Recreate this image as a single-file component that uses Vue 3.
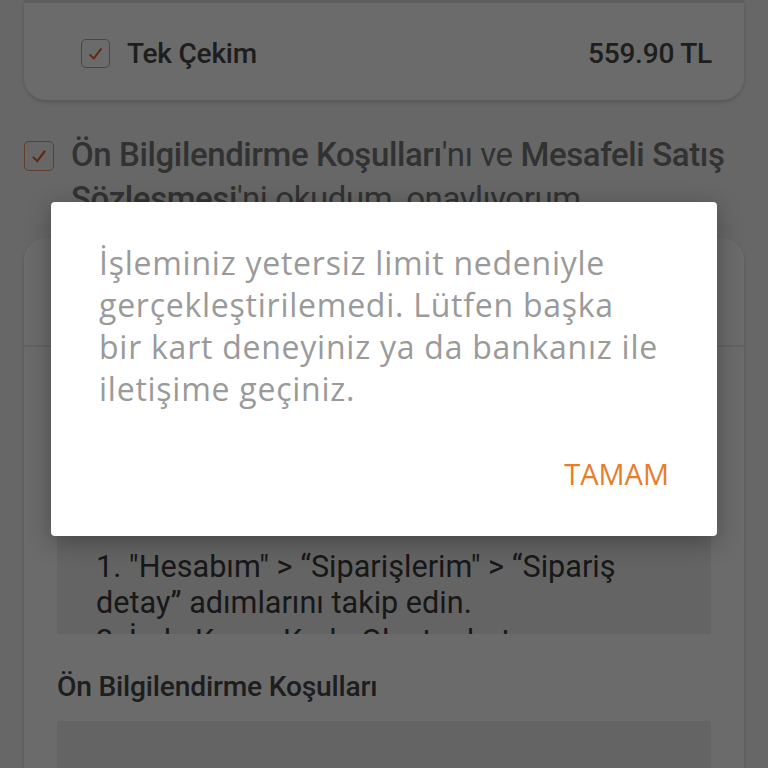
<script setup>
const steps = ['1. "Hesabım" > “Siparişlerim" > “Sipariş detay” adımlarını takip edin.', '2. İade Kargo Kodu Oluştur butonuna']
const lines = ['İşleminiz yetersiz limit nedeniyle', 'gerçekleştirilemedi. Lütfen başka', 'bir kart deneyiniz ya da bankanız ile', 'iletişime geçiniz.']
</script>

<template>
  <div class="screen">
    <div class="page">
      <section class="card pay">
        <div class="pay-row">
          <span class="check">
            <svg viewBox="0 0 16 16"><path d="M4.5 8.5 7 11l4.5-6" /></svg>
          </span>
          <span class="pay-name">Tek Çekim</span>
          <span class="pay-price">559.90 TL</span>
        </div>
      </section>

      <div class="consent">
        <span class="check">
          <svg viewBox="0 0 16 16"><path d="M4.5 8.5 7 11l4.5-6" /></svg>
        </span>
        <p><b>Ön Bilgilendirme Koşulları</b>'nı ve <b>Mesafeli Satış Sözleşmesi</b>'ni okudum, onaylıyorum.</p>
      </div>

      <section class="card terms">
        <div class="terms-head"></div>
        <div class="terms-body">
          <div class="scroll-box">
            <p v-for="s in steps" :key="s">{{ s }}</p>
          </div>
          <h3>Ön Bilgilendirme Koşulları</h3>
          <div class="empty-box"></div>
        </div>
      </section>
    </div>

    <div class="scrim">
      <div class="dialog">
        <p class="message"><span v-for="l in lines" :key="l">{{ l }}</span></p>
        <div class="actions"><span class="ok">TAMAM</span></div>
      </div>
    </div>
  </div>
</template>

<style>
html, body { margin: 0; background: #666; }
</style>

<style scoped>
.screen {
  position: relative;
  width: 768px;
  height: 768px;
  overflow: hidden;
  font-family: Roboto, "Liberation Sans", sans-serif;
  color: #484848;
}
.page {
  display: flex;
  flex-direction: column;
  height: 768px;
  padding: 0 24px;
  box-sizing: border-box;
  background: #f6f6f6;
}
.card {
  background: #fff;
  box-shadow: 0 2px 4px rgba(0, 0, 0, .18);
  flex: none;
}
.pay {
  height: 100px;
  border-radius: 0 0 22px 22px;
  border-top: 3px solid #e0e0e0;
  box-sizing: border-box;
  padding: 0 32px 0 57px;
}
.pay-row {
  display: flex;
  align-items: center;
  height: 97px;
  padding-top: 3px;
  box-sizing: border-box;
  font-size: 28px;
  font-weight: 500;
  letter-spacing: -.2px;
}
.pay-name { margin-left: 17px; }
.pay-price { margin-left: auto; }
.check {
  flex: none;
  width: 29px;
  height: 29px;
  box-sizing: border-box;
  border: 1.5px solid #e8956a;
  border-radius: 5px;
  display: flex;
}
.check svg { width: 100%; height: 100%; fill: none; stroke: #e0671d; stroke-width: 1.2; }
.consent {
  display: flex;
  gap: 17px;
  margin-top: 39px;
  height: 99px;
}
.consent .check { width: 30px; height: 30px; margin-top: 2px; }
.consent p {
  margin: -6px 0 0;
  font-size: 33px;
  line-height: 44px;
  letter-spacing: -.4px;
  color: #777;
}
.consent b { font-weight: 500; }
.terms {
  flex: 1;
  min-height: 0;
  overflow: hidden;
  border-radius: 22px 22px 0 0;
}
.terms-head { height: 107px; border-bottom: 2px solid #ececec; }
.terms-body { padding: 0 33px; }
.scroll-box {
  margin-top: 40px;
  height: 247px;
  padding: 0 39px;
  box-sizing: border-box;
  background: #eee;
  overflow: hidden;
  display: flex;
  flex-direction: column;
  justify-content: flex-end;
  font-size: 30.6px;
  line-height: 36px;
  color: #3a3a3a;
}
.scroll-box p { margin: 0; flex: none; }
.scroll-box p + p { height: 11px; margin-top: 2px; }
h3 {
  margin: 37px 0 0;
  font-size: 28.2px;
  font-weight: 500;
  line-height: 32px;
  letter-spacing: -.2px;
}
.empty-box { margin-top: 18px; height: 60px; background: #eee; }
.scrim {
  position: absolute;
  inset: 0;
  background: rgba(0, 0, 0, .58);
}
.dialog {
  position: absolute;
  left: 51px;
  top: 202px;
  width: 666px;
  height: 334px;
  box-sizing: border-box;
  padding: 40px 48px 0;
  background: #fff;
  border-radius: 4px;
  box-shadow: 0 6px 24px rgba(0, 0, 0, .3);
}
.message {
  margin: 0;
  display: flex;
  flex-direction: column;
  font-family: "Open Sans", sans-serif;
  font-weight: 400;
  font-size: 32px;
  line-height: 42px;
  letter-spacing: .75px;
  white-space: nowrap;
  color: #9a9a9a;
}
.actions {
  position: absolute;
  right: 48px;
  bottom: 43px;
}
.ok {
  font-family: "Open Sans", sans-serif;
  font-weight: 400;
  font-size: 29px;
  color: #e57e2c;
}
</style>
